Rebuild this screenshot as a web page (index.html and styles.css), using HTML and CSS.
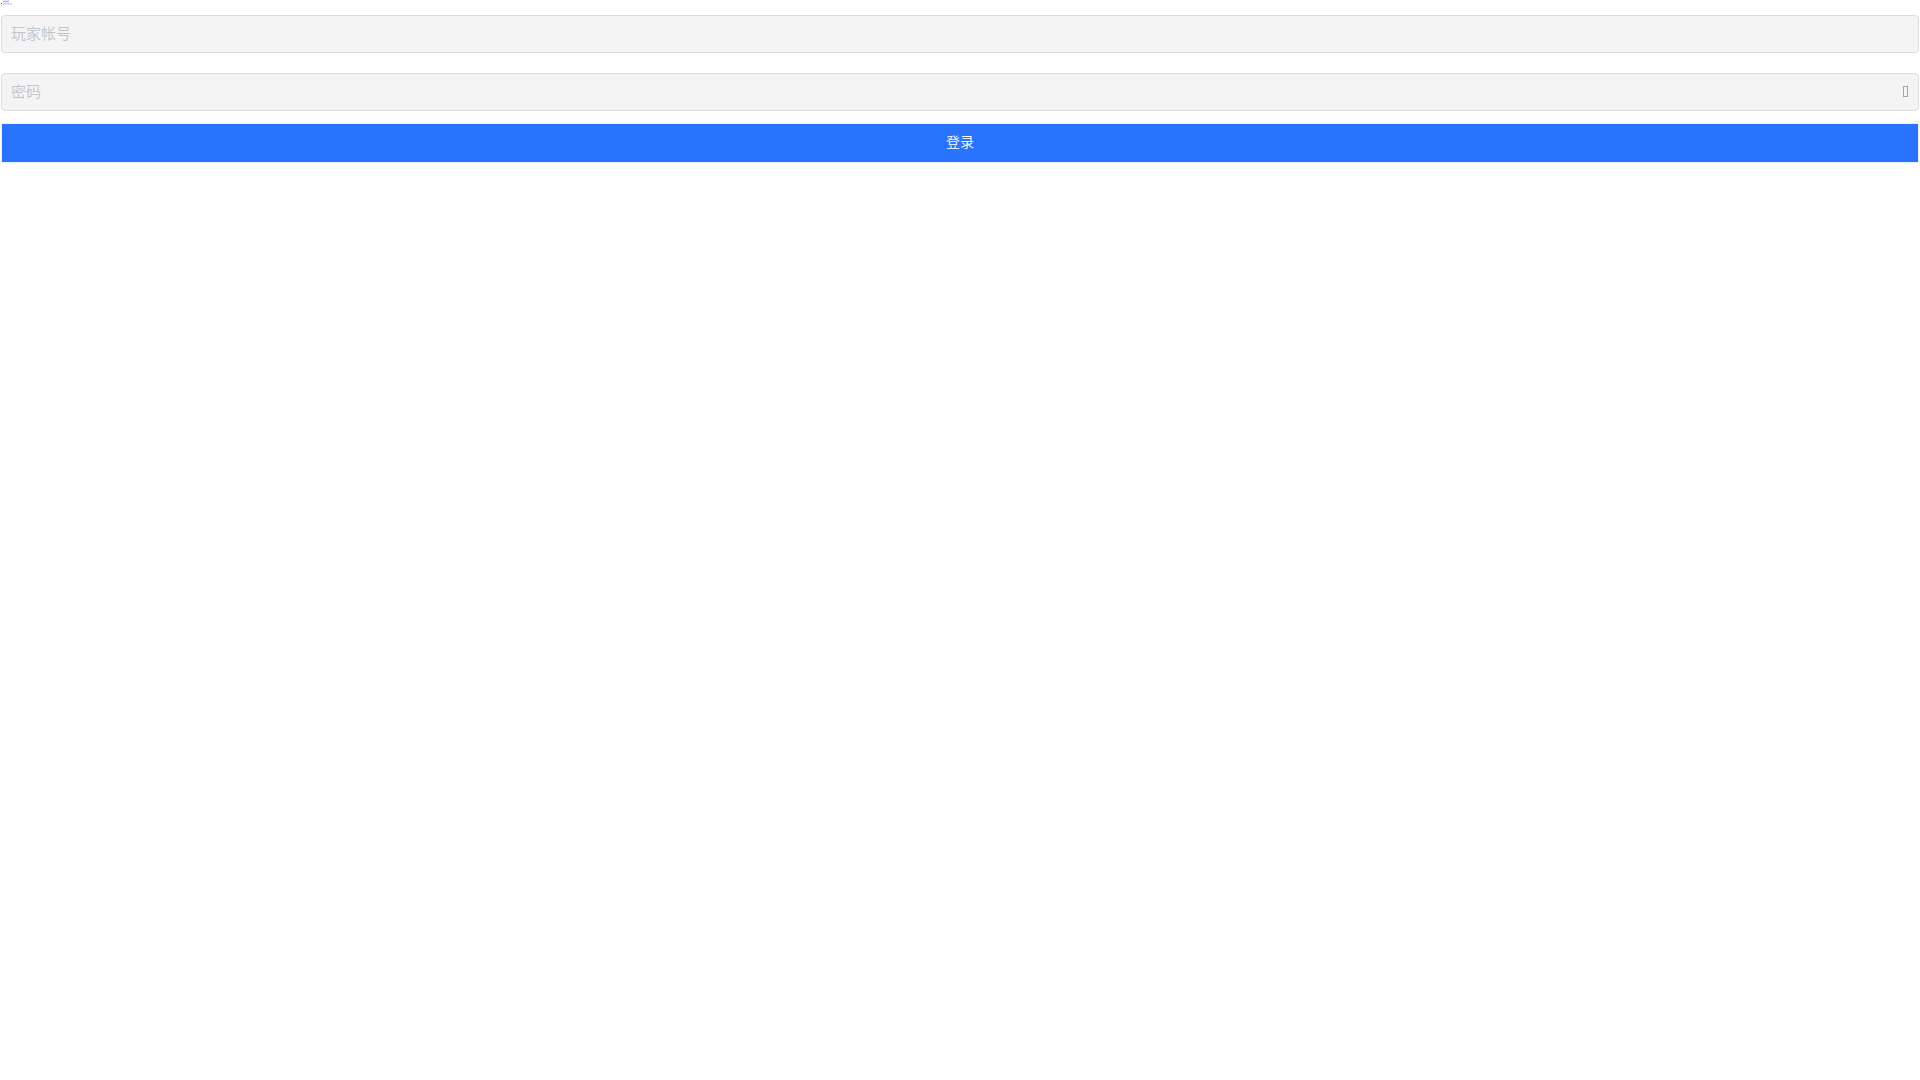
FILE: index.html
```html
<!DOCTYPE html>
<html lang="zh-CN">
<head>
  <meta charset="UTF-8">
  <meta name="viewport" content="width=device-width, initial-scale=1.0">
  <title>登录</title>
  <link rel="stylesheet" href="styles.css">
</head>
<body>
  <main class="login">
    <header class="login-header" aria-hidden="true">
      <span class="dot"></span>
      <span class="brand">
        <span class="brand-name"></span>
        <span class="brand-line"></span>
      </span>
    </header>

    <form id="loginForm">
      <div class="form-item">
        <input type="text" id="account" placeholder="玩家帐号" aria-label="玩家帐号">
      </div>

      <div class="form-item">
        <input type="password" id="password" placeholder="密码" aria-label="密码">
        <button type="button" class="show-pwd" aria-label="显示密码"><span class="glyph"></span></button>
      </div>

      <div class="form-links"><span class="link-line"></span></div>

      <button type="submit" class="login-btn">登录</button>
    </form>
  </main>
</body>
</html>
```

FILE: styles.css
```css
* {
  margin: 0;
  padding: 0;
  box-sizing: border-box;
}

body {
  background: #fff;
  font-family: "Liberation Sans", "Noto Sans CJK SC", sans-serif;
  font-weight: 350;
}

.login {
  padding: 0 1px;
}

.login-header {
  display: flex;
  align-items: flex-end;
  gap: 1px;
  height: 5px;
  margin-bottom: 10px;
}

.dot {
  width: 1px;
  height: 1px;
  margin-bottom: 1px;
  background: #333;
}

.brand-name,
.brand-line {
  display: block;
}

.brand-name {
  width: 6px;
  height: 3px;
  border: solid #dde7fd;
  border-width: 1px 0;
  background: #9dbcfb;
}

.brand-line {
  width: 9px;
  height: 2px;
  background: #dedede;
}

.form-item {
  position: relative;
  margin-bottom: 20px;
}

.form-item input {
  display: block;
  width: 100%;
  height: 38px;
  padding: 0 9px 2px;
  border: 1px solid #dcdcdf;
  border-radius: 4px;
  background: #f4f4f4;
  color: #606266;
  font-family: inherit;
  font-size: 15px;
  font-weight: inherit;
  outline: none;
}

.form-item input::placeholder {
  color: #c0c4cc;
}

.form-item:nth-child(2) {
  margin-bottom: 10px;
}

.show-pwd {
  position: absolute;
  top: 0;
  right: 11px;
  height: 38px;
  padding-bottom: 2px;
  border: none;
  background: none;
  cursor: pointer;
}

.glyph {
  display: block;
  width: 5px;
  height: 11px;
  border: 1px solid #a6a6a6;
}

.form-links {
  display: flex;
  justify-content: flex-end;
  height: 2px;
}

.link-line {
  width: 4px;
  height: 1px;
  background: #e0e0e0;
}

.login-btn {
  display: block;
  width: 100%;
  height: 40px;
  padding-bottom: 4px;
  border: 1px solid #eaf1ff;
  background: #2a73ff;
  color: #fff;
  font-family: inherit;
  font-size: 14px;
  font-weight: inherit;
  cursor: pointer;
}
```
